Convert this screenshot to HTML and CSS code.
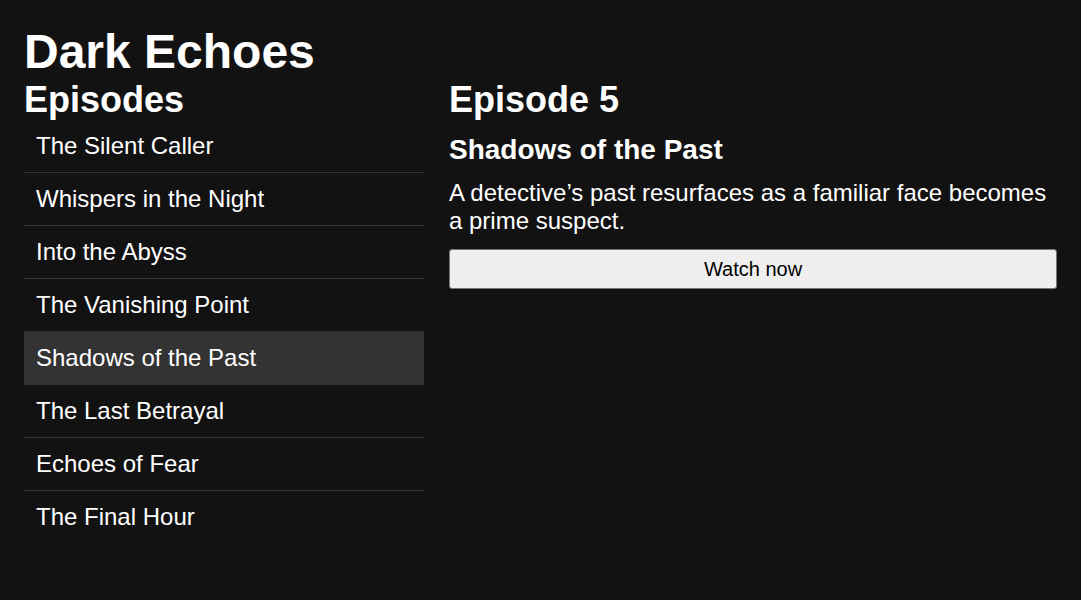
FILE: index.html
```html
<!DOCTYPE html>
<html lang="en">
<head>
<meta charset="utf-8">
<title>Dark Echoes</title>
<link rel="stylesheet" href="styles.css">
</head>
<body>
<h1 class="title">Dark Echoes</h1>
<div class="layout">
  <section class="episodes">
    <h2 class="heading">Episodes</h2>
    <ul class="list">
      <li class="item">The Silent Caller</li>
      <li class="item">Whispers in the Night</li>
      <li class="item">Into the Abyss</li>
      <li class="item">The Vanishing Point</li>
      <li class="item item-active">Shadows of the Past</li>
      <li class="item">The Last Betrayal</li>
      <li class="item">Echoes of Fear</li>
      <li class="item">The Final Hour</li>
    </ul>
  </section>
  <section class="detail">
    <h2 class="heading">Episode 5</h2>
    <h3 class="ep-title">Shadows of the Past</h3>
    <p class="desc">A detective’s past resurfaces as a familiar face becomes a prime suspect.</p>
    <button class="watch" type="button">Watch now</button>
  </section>
</div>
</body>
</html>
```
FILE: styles.css
```css
html, body {
  background: #121212;
}
body {
  margin: 0;
  padding: 24px;
  color: #ffffff;
  font-family: "Liberation Sans", Arial, Helvetica, sans-serif;
}
.title {
  margin: 0;
  font-size: 48px;
  font-weight: 700;
}
.layout {
  display: grid;
  grid-template-columns: 400px 1fr;
  gap: 25px;
}
.heading {
  margin: 0;
  font-size: 36px;
  line-height: 41px;
  font-weight: 700;
}
.list {
  list-style: none;
  margin: 0;
  padding: 0;
}
.item {
  font-size: 24px;
  padding: 12px;
  border-bottom: 1px solid #333333;
}
.item:last-child {
  border-bottom: none;
}
.item-active {
  background: #333333;
}
.ep-title {
  margin: 14px 0 0;
  font-size: 28px;
  font-weight: 700;
}
.desc {
  margin: 13px 0 0;
  font-size: 24px;
}
.watch {
  display: block;
  width: 100%;
  height: 40px;
  margin-top: 14px;
  font-family: "Liberation Sans", Arial, Helvetica, sans-serif;
  font-size: 20px;
  color: #000000;
  background: #efefef;
  border: 1px solid #767676;
  border-radius: 3px;
}
```
